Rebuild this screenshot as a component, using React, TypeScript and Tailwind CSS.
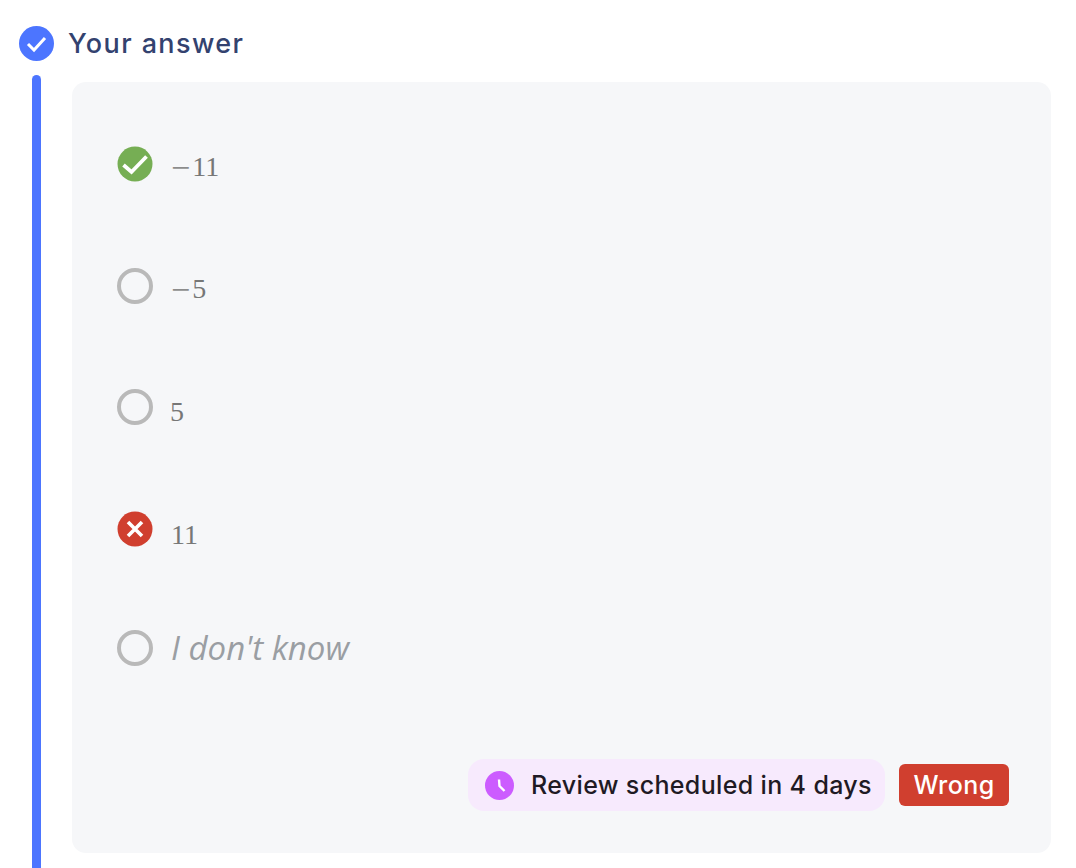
const sans = "font-['Inter',sans-serif]";
const math = "font-['Liberation_Serif',serif] text-[#777777] text-[28px] leading-[36px] whitespace-nowrap";
const row = "flex items-start gap-[18px] h-[36px]";

function CheckCircle({ color }: { color: string }) {
  return (
    <svg width="36" height="36" viewBox="0 0 36 36" className="shrink-0">
      <circle cx="18" cy="18" r="17.5" fill={color} />
      <path d="M6.5 19l8 7L29.5 10.5" fill="none" stroke="#fff" strokeWidth="3.8" />
    </svg>
  );
}

function WrongCircle() {
  return (
    <svg width="36" height="36" viewBox="0 0 36 36" className="shrink-0">
      <circle cx="18" cy="18" r="17.5" fill="#d03f2f" />
      <path d="M11 11l14 14M25 11L11 25" fill="none" stroke="#fff" strokeWidth="3.6" />
    </svg>
  );
}

function Radio() {
  return <div className="w-[36px] h-[36px] shrink-0 rounded-full border-[4px] border-[#b9b9b9]" />;
}

function Minus() {
  return <span className="text-[34px] leading-[20px] mr-[2px] align-[-3px] text-[#8c8c8c]">−</span>;
}

export default function App() {
  return (
    <div className="w-[1076px] h-[868px] overflow-hidden bg-white">
      <div className="flex items-center gap-[14px] pl-[19px] pt-[26px]">
        <svg width="35" height="35" viewBox="0 0 35 35" className="shrink-0">
          <circle cx="17.5" cy="17.5" r="17.5" fill="#4c75ff" />
          <path d="M9 18l6 6L26 12" fill="none" stroke="#fff" strokeWidth="3" />
        </svg>
        <span className={`${sans} text-[27px] leading-[35px] font-medium text-[#33426f] tracking-[1.4px]`}>Your answer</span>
      </div>

      <div className="flex pl-[32px] mt-[14px]">
        <div className="w-[9px] h-[820px] shrink-0 rounded-full bg-[#4c75ff]" />
        <div className="ml-[31px] mt-[7px] w-[979px] h-[771px] rounded-[14px] bg-[#f6f7f9] pl-[45px] pr-[42px] pt-[64px]">
          <div className={row}>
            <CheckCircle color="#76ae54" />
            <span className={`${math} pt-[3px]`}><Minus />11</span>
          </div>
          <div className={`${row} mt-[86px]`}>
            <Radio />
            <span className={`${math} pt-[3px]`}><Minus />5</span>
          </div>
          <div className={`${row} mt-[85px]`}>
            <Radio />
            <span className={`${math} pt-[5px] -ml-[1px]`}>5</span>
          </div>
          <div className={`${row} mt-[86px]`}>
            <WrongCircle />
            <span className={`${math} pt-[6px]`}>11</span>
          </div>
          <div className="flex items-center gap-[18px] h-[36px] mt-[83px]">
            <Radio />
            <span className="font-['Open_Sans',sans-serif] italic text-[33px] leading-[36px] text-[#9a9ea3] whitespace-nowrap">I don't know</span>
          </div>

          <div className="flex items-center justify-end gap-[14px] mt-[93px]">
            <div className="flex items-center h-[52px] w-[417px] rounded-[16px] bg-[#f7eafd] pl-[17px] gap-[17px]">
              <svg width="29" height="29" viewBox="0 0 29 29" className="shrink-0">
                <circle cx="14.5" cy="14.5" r="14.5" fill="#cc5cff" />
                <path d="M14 8.5l0.5 6.5 5 5" fill="none" stroke="#fff" strokeWidth="2.4" />
              </svg>
              <span className={`${sans} text-[25px] leading-[32px] font-medium text-[#1f1a24] tracking-[0.35px] whitespace-nowrap`}>Review scheduled in 4 days</span>
            </div>
            <div className="flex items-center justify-center h-[42px] w-[110px] rounded-[6px] bg-[#d03f2f]">
              <span className={`${sans} text-[25px] leading-[32px] font-medium tracking-[0.4px] text-white`}>Wrong</span>
            </div>
          </div>
        </div>
      </div>
    </div>
  );
}
